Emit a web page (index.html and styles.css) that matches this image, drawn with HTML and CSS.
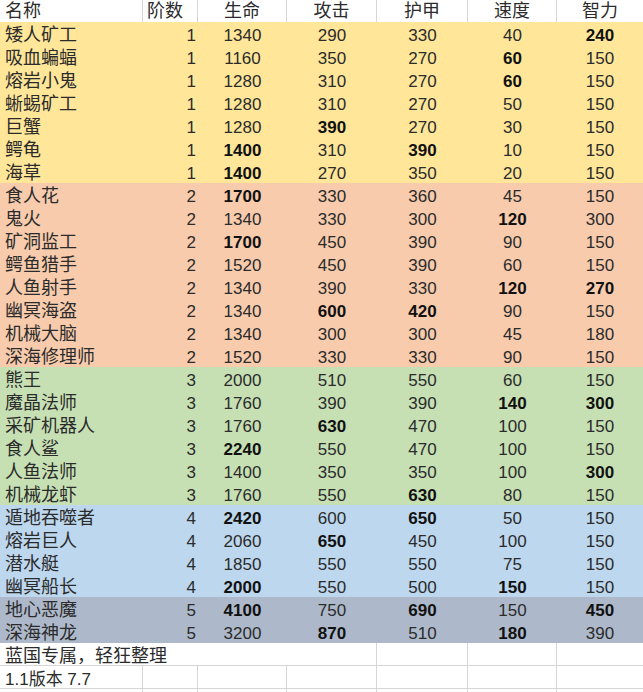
FILE: index.html
```html
<!DOCTYPE html>
<html lang="zh">
<head>
<meta charset="utf-8">
<title>怪物属性表</title>
<link rel="stylesheet" href="styles.css">
</head>
<body>
<div class="sheet">
  <div class="row head">
    <div class="c name">名称</div><div class="c tier-h">阶数</div><div class="c">生命</div><div class="c">攻击</div><div class="c">护甲</div><div class="c">速度</div><div class="c">智力</div>
  </div>

  <div class="row t1"><div class="c name">矮人矿工</div><div class="c tier">1</div><div class="c">1340</div><div class="c">290</div><div class="c">330</div><div class="c">40</div><div class="c hi">240</div></div>
  <div class="row t1"><div class="c name">吸血蝙蝠</div><div class="c tier">1</div><div class="c">1160</div><div class="c">350</div><div class="c">270</div><div class="c hi">60</div><div class="c">150</div></div>
  <div class="row t1"><div class="c name">熔岩小鬼</div><div class="c tier">1</div><div class="c">1280</div><div class="c">310</div><div class="c">270</div><div class="c hi">60</div><div class="c">150</div></div>
  <div class="row t1"><div class="c name">蜥蜴矿工</div><div class="c tier">1</div><div class="c">1280</div><div class="c">310</div><div class="c">270</div><div class="c">50</div><div class="c">150</div></div>
  <div class="row t1"><div class="c name">巨蟹</div><div class="c tier">1</div><div class="c">1280</div><div class="c hi">390</div><div class="c">270</div><div class="c">30</div><div class="c">150</div></div>
  <div class="row t1"><div class="c name">鳄龟</div><div class="c tier">1</div><div class="c hi">1400</div><div class="c">310</div><div class="c hi">390</div><div class="c">10</div><div class="c">150</div></div>
  <div class="row t1"><div class="c name">海草</div><div class="c tier">1</div><div class="c hi">1400</div><div class="c">270</div><div class="c">350</div><div class="c">20</div><div class="c">150</div></div>

  <div class="row t2"><div class="c name">食人花</div><div class="c tier">2</div><div class="c hi">1700</div><div class="c">330</div><div class="c">360</div><div class="c">45</div><div class="c">150</div></div>
  <div class="row t2"><div class="c name">鬼火</div><div class="c tier">2</div><div class="c">1340</div><div class="c">330</div><div class="c">300</div><div class="c hi">120</div><div class="c">300</div></div>
  <div class="row t2"><div class="c name">矿洞监工</div><div class="c tier">2</div><div class="c hi">1700</div><div class="c">450</div><div class="c">390</div><div class="c">90</div><div class="c">150</div></div>
  <div class="row t2"><div class="c name">鳄鱼猎手</div><div class="c tier">2</div><div class="c">1520</div><div class="c">450</div><div class="c">390</div><div class="c">60</div><div class="c">150</div></div>
  <div class="row t2"><div class="c name">人鱼射手</div><div class="c tier">2</div><div class="c">1340</div><div class="c">390</div><div class="c">330</div><div class="c hi">120</div><div class="c hi">270</div></div>
  <div class="row t2"><div class="c name">幽冥海盗</div><div class="c tier">2</div><div class="c">1340</div><div class="c hi">600</div><div class="c hi">420</div><div class="c">90</div><div class="c">150</div></div>
  <div class="row t2"><div class="c name">机械大脑</div><div class="c tier">2</div><div class="c">1340</div><div class="c">300</div><div class="c">300</div><div class="c">45</div><div class="c">180</div></div>
  <div class="row t2"><div class="c name">深海修理师</div><div class="c tier">2</div><div class="c">1520</div><div class="c">330</div><div class="c">330</div><div class="c">90</div><div class="c">150</div></div>

  <div class="row t3"><div class="c name">熊王</div><div class="c tier">3</div><div class="c">2000</div><div class="c">510</div><div class="c">550</div><div class="c">60</div><div class="c">150</div></div>
  <div class="row t3"><div class="c name">魔晶法师</div><div class="c tier">3</div><div class="c">1760</div><div class="c">390</div><div class="c">390</div><div class="c hi">140</div><div class="c hi">300</div></div>
  <div class="row t3"><div class="c name">采矿机器人</div><div class="c tier">3</div><div class="c">1760</div><div class="c hi">630</div><div class="c">470</div><div class="c">100</div><div class="c">150</div></div>
  <div class="row t3"><div class="c name">食人鲨</div><div class="c tier">3</div><div class="c hi">2240</div><div class="c">550</div><div class="c">470</div><div class="c">100</div><div class="c">150</div></div>
  <div class="row t3"><div class="c name">人鱼法师</div><div class="c tier">3</div><div class="c">1400</div><div class="c">350</div><div class="c">350</div><div class="c">100</div><div class="c hi">300</div></div>
  <div class="row t3"><div class="c name">机械龙虾</div><div class="c tier">3</div><div class="c">1760</div><div class="c">550</div><div class="c hi">630</div><div class="c">80</div><div class="c">150</div></div>

  <div class="row t4"><div class="c name">遁地吞噬者</div><div class="c tier">4</div><div class="c hi">2420</div><div class="c">600</div><div class="c hi">650</div><div class="c">50</div><div class="c">150</div></div>
  <div class="row t4"><div class="c name">熔岩巨人</div><div class="c tier">4</div><div class="c">2060</div><div class="c hi">650</div><div class="c">450</div><div class="c">100</div><div class="c">150</div></div>
  <div class="row t4"><div class="c name">潜水艇</div><div class="c tier">4</div><div class="c">1850</div><div class="c">550</div><div class="c">550</div><div class="c">75</div><div class="c">150</div></div>
  <div class="row t4"><div class="c name">幽冥船长</div><div class="c tier">4</div><div class="c hi">2000</div><div class="c">550</div><div class="c">500</div><div class="c hi">150</div><div class="c">150</div></div>

  <div class="row t5"><div class="c name">地心恶魔</div><div class="c tier">5</div><div class="c hi">4100</div><div class="c">750</div><div class="c hi">690</div><div class="c">150</div><div class="c hi">450</div></div>
  <div class="row t5"><div class="c name">深海神龙</div><div class="c tier">5</div><div class="c">3200</div><div class="c hi">870</div><div class="c">510</div><div class="c hi">180</div><div class="c">390</div></div>

  <div class="row foot"><div class="c name span4">蓝国专属，轻狂整理</div><div class="c"></div><div class="c"></div><div class="c"></div></div>
  <div class="row foot"><div class="c name ver">1.1版本 7.7</div><div class="c"></div><div class="c"></div><div class="c"></div><div class="c"></div><div class="c"></div><div class="c"></div></div>
  <div class="row foot"><div class="c"></div><div class="c"></div><div class="c"></div><div class="c"></div><div class="c"></div><div class="c"></div><div class="c"></div></div>
</div>
</body>
</html>
```

FILE: styles.css
```css
html, body {
  margin: 0;
  padding: 0;
  overflow: hidden;
  background: #ffffff;
}

.sheet {
  width: 643px;
  font-family: "Liberation Sans", "Noto Sans CJK SC", sans-serif;
  font-size: 17px;
  color: #2b2b2b;
}

.row {
  display: grid;
  grid-template-columns: 143px 55px 89px 90px 91px 89px 86px;
  height: 23px;
}

.c {
  box-sizing: border-box;
  height: 23px;
  padding-top: 4px;
  line-height: 19px;
  text-align: center;
  white-space: nowrap;
  overflow: visible;
}

.name {
  text-align: left;
  padding-left: 5px;
  font-size: 18px;
}

.ver {
  font-size: 17px;
}

.tier {
  text-align: right;
  padding-right: 2px;
}

.tier-h {
  text-align: left;
  padding-left: 4px;
}

.hi {
  font-weight: bold;
  color: #111111;
}

.head {
  height: 22px;
}

.head .c {
  height: 22px;
  padding-top: 2px;
  font-size: 18px;
  border-right: 1px solid #d6d6d6;
}

.head .c:last-child {
  border-right: none;
}

.t1 { background: #ffe699; }
.t2 { background: #f8cbad; }
.t3 { background: #c6e0b4; }
.t4 { background: #bdd7ee; }
.t5 { background: #adb9ca; }

.foot .c {
  border-right: 1px solid #d6d6d6;
  border-bottom: 1px solid #d6d6d6;
}

.foot .c:last-child {
  border-right: none;
}

.span4 {
  grid-column: span 4;
}
```
